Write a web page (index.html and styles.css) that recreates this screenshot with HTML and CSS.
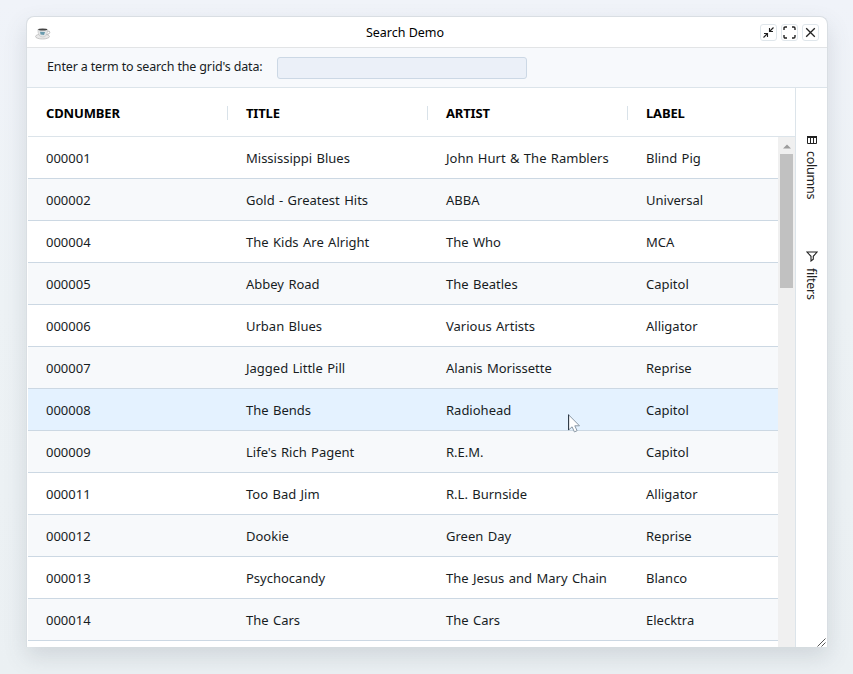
FILE: index.html
```
<!DOCTYPE html>
<html lang="en">
<head>
<meta charset="utf-8">
<title>Search Demo</title>
<link rel="stylesheet" href="styles.css">
</head>
<body>
<main class="window">
  <header class="titlebar">
    <svg class="cup" width="16" height="13" viewBox="0 0 16 13"><ellipse cx="7.5" cy="9.5" rx="7" ry="2.5" fill="#e8e8e8" stroke="#bbb" stroke-width=".8"/><path d="M12 4.2q3.2-.7 2.8 1.2-.4 2.1-3.5 2.3" fill="none" stroke="#bbb"/><path d="M2.800 2.500h9.800q0 7.500-4.900 7.500T2.800 2.500z" fill="#e2e4e5" stroke="#bbb" stroke-width=".5"/><ellipse cx="7.700" cy="2.500" rx="4.500" ry="1.100" fill="#444"/><path d="M5 4.800l5 .2-1 3-3.500-.6z" fill="#6a9bae"/></svg>
    <h1 class="title">Search Demo</h1>
    <div class="controls">
      <button class="control" aria-label="Minimize"><svg width="13" height="13" viewBox="0 0 13 13"><path d="M7.500 2v3.500H11M7.500 5.500l4-4M2 7.500h3.500V11M5.500 7.500l-4 4" fill="none" stroke="#222" stroke-width="1.100"/><path d="M7 3v3h3zM3 7h3v3z" fill="#222"/></svg></button>
      <button class="control" aria-label="Maximize"><svg width="13" height="13" viewBox="0 0 13 13"><path d="M1 4V2.200Q1 1 2.200 1H4M9 1h1.800Q12 1 12 2.200V4M12 9v1.800q0 1.200-1.200 1.200H9M4 12H2.200Q1 12 1 10.800V9" fill="none" stroke="#222" stroke-width="1.400"/></svg></button>
      <button class="control" aria-label="Close"><svg width="13" height="13" viewBox="0 0 13 13"><path d="M2.200 2.200l8.600 8.600M10.800 2.200l-8.600 8.600" fill="none" stroke="#222" stroke-width="1.300"/></svg></button>
    </div>
  </header>
  <div class="search">
    <label class="search-label" for="term">Enter a term to search the grid's data:</label>
    <input class="search-input" id="term" type="text">
  </div>
  <div class="content">
    <section class="grid">
      <div class="row head"><span>CDNUMBER</span><span>TITLE</span><span>ARTIST</span><span>LABEL</span></div>
      <div class="viewport">
        <div class="rows">
          <div class="row"><span>000001</span><span>Mississippi Blues</span><span>John Hurt &amp; The Ramblers</span><span>Blind Pig</span></div>
          <div class="row"><span>000002</span><span>Gold - Greatest Hits</span><span>ABBA</span><span>Universal</span></div>
          <div class="row"><span>000004</span><span>The Kids Are Alright</span><span>The Who</span><span>MCA</span></div>
          <div class="row"><span>000005</span><span>Abbey Road</span><span>The Beatles</span><span>Capitol</span></div>
          <div class="row"><span>000006</span><span>Urban Blues</span><span>Various Artists</span><span>Alligator</span></div>
          <div class="row"><span>000007</span><span>Jagged Little Pill</span><span>Alanis Morissette</span><span>Reprise</span></div>
          <div class="row hover"><span>000008</span><span>The Bends</span><span>Radiohead</span><span>Capitol</span></div>
          <div class="row"><span>000009</span><span>Life's Rich Pagent</span><span>R.E.M.</span><span>Capitol</span></div>
          <div class="row"><span>000011</span><span>Too Bad Jim</span><span>R.L. Burnside</span><span>Alligator</span></div>
          <div class="row"><span>000012</span><span>Dookie</span><span>Green Day</span><span>Reprise</span></div>
          <div class="row"><span>000013</span><span>Psychocandy</span><span>The Jesus and Mary Chain</span><span>Blanco</span></div>
          <div class="row"><span>000014</span><span>The Cars</span><span>The Cars</span><span>Elecktra</span></div>
        </div>
        <div class="scrollbar"><svg class="arrow" width="8" height="5" viewBox="0 0 8 5"><path d="M0 4.500l4-4 4 4z" fill="#9c9c9c"/></svg><div class="thumb"></div></div>
      </div>
    </section>
    <aside class="side">
      <div class="tab columns"><svg width="12" height="10" viewBox="0 0 12 10"><path d="M1.500 1.500h9v7h-9zM4.500 2v6.500M7.500 2v6.500" fill="none" stroke="#222"/><path d="M1 1h10v2H1z" fill="#222"/></svg><span>columns</span></div>
      <div class="tab"><svg width="12" height="11" viewBox="0 0 12 11"><path d="M1 1h10L7.300 5.300v3L5 10V5.300z" fill="none" stroke="#222" stroke-width="1.100"/></svg><span>filters</span></div>
    </aside>
  </div>
  <svg class="resize" width="9" height="9" viewBox="0 0 9 9"><path d="M.5 8.500l8-8M4.500 8.500l4-4" stroke="#555"/></svg>
</main>
<svg class="cursor" width="13" height="19" viewBox="0 0 13 19"><path d="M.6.800v15.200l3.500-3.200 2.300 5.100 2.700-1.200-2.300-4.900h4.700z" fill="#fff" stroke="#8a98a5"/><path d="M.6.500v15.500" stroke="#26323e"/></svg>
</body>
</html>
```
FILE: styles.css
```
* { box-sizing: border-box; }
body {
  margin: 0;
  height: 674px;
  padding: 16px 26px 27px;
  overflow: hidden;
  background: linear-gradient(#f0f3f9, #edf2f5 45%, #ebf0f3);
  color: #181d1f;
  font: 13px/18px "Noto Sans", "Open Sans", sans-serif;
}
.window {
  position: relative;
  display: flex;
  flex-direction: column;
  width: 802px;
  height: 631px;
  border: 1px solid #d9dee3;
  border-bottom: 0;
  border-radius: 8px 8px 0 0;
  background: #fff;
  box-shadow: 0 10px 22px rgba(80, 90, 100, .17);
}
.titlebar {
  display: grid;
  grid-template-columns: 60px 1fr 60px;
  align-items: center;
  height: 31px;
  padding: 0 8px;
  border-bottom: 1px solid #e2e4e6;
}
.cup { margin-top: 3px; }
.title {
  margin: 1px 0 0;
  padding-right: 44px;
  text-align: center;
  color: #000;
  font-size: 12.500px;
  font-weight: 400;
}
.controls { display: flex; justify-content: flex-end; gap: 4px; }
.control {
  display: grid;
  place-items: center;
  flex: none;
  width: 17px;
  height: 17px;
  padding: 0;
  border: 1px solid #dfe6eb;
  border-radius: 3px;
  background: #fff;
}
.search {
  display: flex;
  align-items: center;
  height: 40px;
  padding-left: 20px;
  border-bottom: 1px solid #dce4ea;
  background: #f7f9fc;
}
.search-label {
  width: 230px;
  margin-top: -2px;
  white-space: nowrap;
  font-size: 12.500px;
  letter-spacing: -.15px;
}
.search-input {
  width: 250px;
  height: 22px;
  padding: 0 6px;
  border: 1px solid #ccd8e5;
  border-radius: 3px;
  background: #ebf0f8;
  font: inherit;
}
.content { display: flex; flex: 1; min-height: 0; padding-left: 1px; }
.grid { display: flex; flex-direction: column; width: 767px; }
.row {
  display: grid;
  grid-template-columns: 200px 200px 200px 1fr;
  align-items: center;
  height: 42px;
  padding-left: 18px;
  border-bottom: 1px solid #ccd8e3;
  white-space: nowrap;
  word-spacing: 1px;
}
.row:nth-child(even) { background: #f7f9fb; }
.rows .hover { background: #e4f2ff; }
.head {
  flex: none;
  height: 49px;
  padding-top: 1px;
  border-color: #dce4ea;
  color: #000;
  font-weight: 700;
  letter-spacing: -.15px;
}
.head span { display: flex; align-items: center; justify-content: space-between; padding-right: 18px; }
.head span:not(:last-child)::after { content: ""; width: 1px; height: 14px; background: #d9e2e9; }
.viewport { display: flex; flex: 1; min-height: 0; }
.rows { flex: 1; }
.scrollbar { width: 17px; padding: 7px 2px 0; background: #f0f0f0; }
.arrow { display: block; margin: 0 auto 5px; }
.thumb { height: 134px; background: #c1c1c1; }
.side {
  display: flex;
  flex-direction: column;
  flex: 1;
  padding: 47px 0 0 7px;
  border-left: 1px solid #dce4ea;
}
.tab { display: flex; flex-direction: column; width: 18px; align-items: center; gap: 6px; height: 116px; color: #222; }
.tab span { writing-mode: vertical-rl; margin-right: 2px; font-size: 12.500px; letter-spacing: -.25px; }
.resize { position: absolute; right: 1px; bottom: 0; }
.cursor { position: absolute; left: 568px; top: 414px; }
```
